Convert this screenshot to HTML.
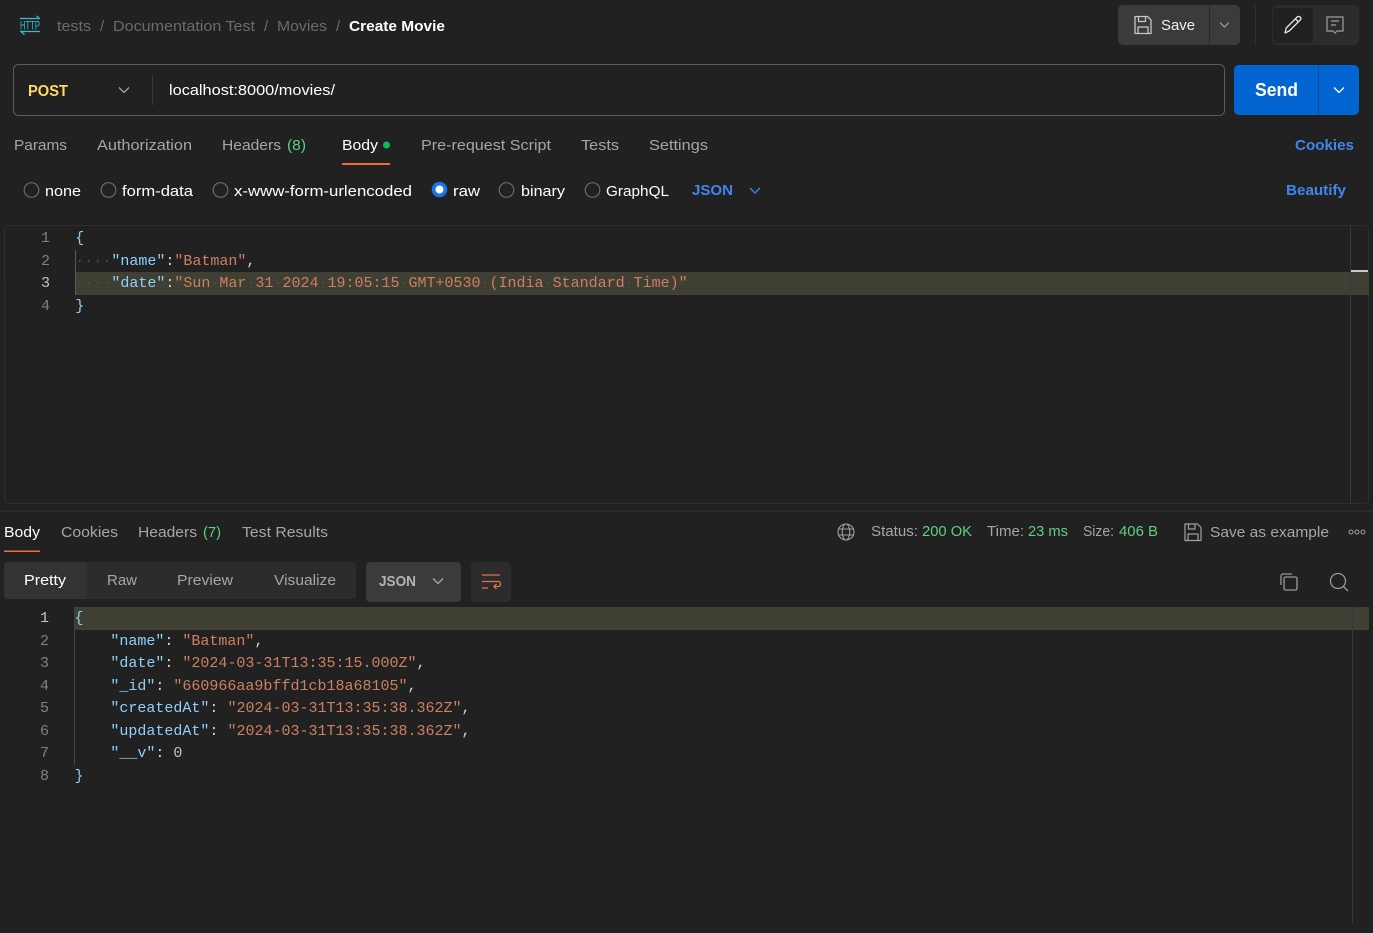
<!DOCTYPE html>
<html><head><meta charset="utf-8"><title>Create Movie</title>
<style>
html,body{margin:0;padding:0;background:#212121;width:1373px;height:933px;overflow:hidden}
svg{display:block;position:absolute;left:0;top:0}
text{font-family:"Liberation Sans",sans-serif;font-size:15px;white-space:pre}
.m,.m text{font-family:"Liberation Mono",monospace;font-size:15px}
.g{fill:#a6a6a6}.w{fill:#ffffff}.bc{fill:#6b6b6b}.gr{fill:#5fcf80}.bl{fill:#3f86f0;font-weight:bold}
.k{fill:#8fd0fb}.s{fill:#ce8060}.p{fill:#d4d4d4}.n{fill:#808080}.d{fill:#505046}
.i{fill:none;stroke:#a8a8a8;stroke-width:1.3;stroke-linecap:round;stroke-linejoin:round}
</style></head><body>
<svg width="1373" height="933" viewBox="0 0 1373 933" xmlns="http://www.w3.org/2000/svg">
<rect width="1373" height="933" fill="#212121"/>

<!-- HTTP icon -->
<g fill="none" stroke="#2fc0d8" stroke-width="1.2">
<path d="M20 18.500H40M36.500 15.800L39.500 18.500"/><path d="M20 31.500H40M21 31.500L24.500 34.500"/>
</g>
<text x="20" y="29.500" style="font-size:11.500px" fill="#2fc0d8" textLength="20" lengthAdjust="spacingAndGlyphs">HTTP</text>

<!-- breadcrumb -->
<text class="bc" x="57" y="31" textLength="34" lengthAdjust="spacingAndGlyphs">tests</text>
<text class="bc" x="100" y="31">/</text>
<text class="bc" x="113" y="31" textLength="142" lengthAdjust="spacingAndGlyphs">Documentation Test</text>
<text class="bc" x="264" y="31">/</text>
<text class="bc" x="277" y="31" textLength="50" lengthAdjust="spacingAndGlyphs">Movies</text>
<text class="bc" x="336" y="31">/</text>
<text class="w" x="349" y="31" textLength="96" lengthAdjust="spacingAndGlyphs" font-weight="bold">Create Movie</text>

<!-- Save group -->
<rect x="1118" y="5" width="122" height="40" rx="5" fill="#3b3b3b"/>
<rect x="1209" y="5" width="1" height="40" fill="#2a2a2a"/>
<g fill="none" stroke="#c8c8c8" stroke-width="1.3" stroke-linejoin="round">
<path d="M1135 16.500h12.500l3.500 3.500v13.500h-16z"/><path d="M1138.500 16.500v5h7v-5"/><path d="M1138 33.500v-6.500h10v6.500"/>
</g>
<text fill="#f0f0f0" x="1161" y="30" textLength="34" lengthAdjust="spacingAndGlyphs">Save</text>
<path d="M1220 22.500l4.500 4.500 4.500-4.500" fill="none" stroke="#a0a0a0" stroke-width="1.200"/>
<rect x="1255" y="5" width="1" height="40" fill="#2e2e2e"/>
<rect x="1272" y="5" width="87" height="40" rx="5" fill="#2c2c2c"/>
<rect x="1273" y="8" width="40" height="35" rx="4" fill="#212121"/>
<path d="M1285 33l1.200-5 11-11q1.500-1.200 3 0t0 3l-11 11zM1295.500 19l3 3" fill="none" stroke="#e6e6e6" stroke-width="1.300" stroke-linejoin="round"/>
<path d="M1327 17h16v14h-6l-2 2-2-2h-6zM1331 21h8M1331 25h5" fill="none" stroke="#a0a0a0" stroke-width="1.200" stroke-linejoin="round"/>

<!-- URL bar -->
<rect x="13.500" y="64.500" width="1211" height="51" rx="5" fill="#212121" stroke="#5c5c5c"/>
<text x="28" y="96" fill="#ffd966" font-weight="bold" textLength="40" lengthAdjust="spacingAndGlyphs" style="font-size:16px">POST</text>
<path d="M119 87.500l5 5 5-5" fill="none" stroke="#a8a8a8" stroke-width="1.300"/>
<rect x="152" y="75" width="1" height="30" fill="#3a3a3a"/>
<text class="w" x="169" y="95" textLength="166" lengthAdjust="spacingAndGlyphs">localhost:8000/movies/</text>

<!-- Send -->
<rect x="1234" y="65" width="125" height="50" rx="5" fill="#0265d2"/>
<rect x="1318" y="65" width="1" height="50" fill="#0a4f9e"/>
<text class="w" x="1255" y="96" textLength="43" lengthAdjust="spacingAndGlyphs" font-weight="bold" style="font-size:18px">Send</text>
<path d="M1334 87.500l5 5 5-5" fill="none" stroke="#fff" stroke-width="1.300"/>

<!-- request tabs -->
<text class="g" x="14" y="150" textLength="53" lengthAdjust="spacingAndGlyphs">Params</text>
<text class="g" x="97" y="150" textLength="95" lengthAdjust="spacingAndGlyphs">Authorization</text>
<text class="g" x="222" y="150" textLength="59" lengthAdjust="spacingAndGlyphs">Headers</text>
<text class="gr" x="287" y="150" textLength="19" lengthAdjust="spacingAndGlyphs">(8)</text>
<text class="w" x="342" y="150" textLength="36" lengthAdjust="spacingAndGlyphs">Body</text>
<circle cx="386.500" cy="145" r="3.500" fill="#0cbb52"/>
<rect x="342" y="163" width="48" height="2" fill="#f26b3a"/>
<text class="g" x="421" y="150" textLength="130" lengthAdjust="spacingAndGlyphs">Pre-request Script</text>
<text class="g" x="581" y="150" textLength="38" lengthAdjust="spacingAndGlyphs">Tests</text>
<text class="g" x="649" y="150" textLength="59" lengthAdjust="spacingAndGlyphs">Settings</text>
<text class="bl" x="1295" y="150" textLength="59" lengthAdjust="spacingAndGlyphs">Cookies</text>

<!-- radios -->
<g fill="none" stroke="#6a6a6a" stroke-width="1.200">
<circle cx="31.500" cy="190" r="7.300"/><circle cx="108.500" cy="190" r="7.300"/><circle cx="220.500" cy="190" r="7.300"/>
<circle cx="506.500" cy="190" r="7.300"/><circle cx="592.500" cy="190" r="7.300"/>
</g>
<circle cx="439.500" cy="189.500" r="7.800" fill="#1a73e8"/><circle cx="439.500" cy="189.500" r="4" fill="#fff"/>
<text class="w" x="45" y="196" textLength="36" lengthAdjust="spacingAndGlyphs">none</text>
<text class="w" x="122" y="196" textLength="71" lengthAdjust="spacingAndGlyphs">form-data</text>
<text class="w" x="234" y="196" textLength="178" lengthAdjust="spacingAndGlyphs">x-www-form-urlencoded</text>
<text class="w" x="453" y="196" textLength="27" lengthAdjust="spacingAndGlyphs">raw</text>
<text class="w" x="521" y="196" textLength="44" lengthAdjust="spacingAndGlyphs">binary</text>
<text class="w" x="606" y="196" textLength="63" lengthAdjust="spacingAndGlyphs">GraphQL</text>
<text class="bl" x="692" y="195" textLength="41" lengthAdjust="spacingAndGlyphs">JSON</text>
<path d="M750 188l5 5 5-5" fill="none" stroke="#3f86f0" stroke-width="1.300"/>
<text class="bl" x="1286" y="195" textLength="60" lengthAdjust="spacingAndGlyphs">Beautify</text>

<!-- request editor -->
<rect x="4.500" y="225.500" width="1364" height="278" rx="4" fill="#212121" stroke="#2e2e2e"/>
<rect x="76" y="272" width="1293" height="23" fill="#3f3f33"/>
<rect x="75" y="250" width="1" height="45" fill="#5a5a5a"/>
<rect x="1350" y="226" width="1" height="277" fill="#383838"/>
<rect x="1351" y="270" width="17" height="2" fill="#c8c8c8"/>
<g class="m">
<text class="n" x="50" y="242" text-anchor="end">1</text>
<text class="n" x="50" y="265" text-anchor="end">2</text>
<text x="50" y="287" text-anchor="end" fill="#c4c4c4">3</text>
<text class="n" x="50" y="310" text-anchor="end">4</text>
<text class="k" x="75.300" y="242">{</text>
<text x="75.300" y="265"><tspan class="d">····</tspan><tspan class="k">"name"</tspan><tspan class="p">:</tspan><tspan class="s">"Batman"</tspan><tspan class="p">,</tspan></text>
<text x="75.300" y="287"><tspan class="d">····</tspan><tspan class="k">"date"</tspan><tspan class="p">:</tspan><tspan class="s">"Sun</tspan><tspan class="d">·</tspan><tspan class="s">Mar</tspan><tspan class="d">·</tspan><tspan class="s">31</tspan><tspan class="d">·</tspan><tspan class="s">2024</tspan><tspan class="d">·</tspan><tspan class="s">19:05:15</tspan><tspan class="d">·</tspan><tspan class="s">GMT+0530</tspan><tspan class="d">·</tspan><tspan class="s">(India</tspan><tspan class="d">·</tspan><tspan class="s">Standard</tspan><tspan class="d">·</tspan><tspan class="s">Time)"</tspan></text>
<text class="k" x="75.300" y="310">}</text>
</g>

<!-- divider -->
<rect x="0" y="510" width="1373" height="2" fill="#2a2a2a"/>

<!-- response tabs -->
<text class="w" x="4" y="537" textLength="36" lengthAdjust="spacingAndGlyphs">Body</text>
<rect x="4" y="550.500" width="36" height="1.500" fill="#f26b3a"/>
<text class="g" x="61" y="537" textLength="57" lengthAdjust="spacingAndGlyphs">Cookies</text>
<text class="g" x="138" y="537" textLength="59" lengthAdjust="spacingAndGlyphs">Headers</text>
<text class="gr" x="203" y="537" textLength="18" lengthAdjust="spacingAndGlyphs">(7)</text>
<text class="g" x="242" y="537" textLength="86" lengthAdjust="spacingAndGlyphs">Test Results</text>

<!-- status -->
<g class="i" style="stroke:#a0a0a0;stroke-width:1.100">
<circle cx="846" cy="532" r="8"/><ellipse cx="846" cy="532" rx="3.800" ry="8"/><path d="M838.700 529h14.600M838.700 535h14.600"/>
</g>
<text class="g" x="871" y="536" textLength="47" lengthAdjust="spacingAndGlyphs">Status:</text>
<text class="gr" x="922" y="536" textLength="50" lengthAdjust="spacingAndGlyphs">200 OK</text>
<text class="g" x="987" y="536" textLength="37" lengthAdjust="spacingAndGlyphs">Time:</text>
<text class="gr" x="1028" y="536" textLength="40" lengthAdjust="spacingAndGlyphs">23 ms</text>
<text class="g" x="1083" y="536" textLength="31" lengthAdjust="spacingAndGlyphs">Size:</text>
<text class="gr" x="1119" y="536" textLength="39" lengthAdjust="spacingAndGlyphs">406 B</text>
<g fill="none" stroke="#a0a0a0" stroke-width="1.200" stroke-linejoin="round">
<path d="M1185 524h12.500l3.500 3.500v13h-16z"/><path d="M1188.500 524v5h6.500v-5"/><path d="M1188 540.500v-6.500h10v6.500"/>
</g>
<text class="g" x="1210" y="537" textLength="119" lengthAdjust="spacingAndGlyphs">Save as example</text>
<g fill="none" stroke="#a0a0a0" stroke-width="1"><circle cx="1351" cy="532" r="2"/><circle cx="1357" cy="532" r="2"/><circle cx="1363" cy="532" r="2"/></g>

<!-- view controls -->
<rect x="4" y="562" width="352" height="37" rx="4" fill="#2c2c2c"/>
<path d="M8 562h79v37H8a4 4 0 0 1-4-4v-29a4 4 0 0 1 4-4z" fill="#333333"/>
<text class="w" x="24" y="585" textLength="42" lengthAdjust="spacingAndGlyphs">Pretty</text>
<text class="g" x="107" y="585" textLength="30" lengthAdjust="spacingAndGlyphs">Raw</text>
<text class="g" x="177" y="585" textLength="56" lengthAdjust="spacingAndGlyphs">Preview</text>
<text class="g" x="274" y="585" textLength="62" lengthAdjust="spacingAndGlyphs">Visualize</text>
<rect x="366" y="562" width="95" height="40" rx="4" fill="#3b3b3b"/>
<text x="379" y="586" fill="#b4b4b4" font-weight="bold" textLength="37" lengthAdjust="spacingAndGlyphs">JSON</text>
<path d="M433 578.500l5 5 5-5" fill="none" stroke="#a8a8a8" stroke-width="1.300"/>
<rect x="471" y="562" width="40" height="40" rx="4" fill="#2c2c2c"/>
<path d="M482 575h18M482 581.500h16q2.500 0 2.500 2.500t-2.500 2.500h-4M496.500 584l-2.500 2.500 2.500 2.500M482 588h6" fill="none" stroke="#e0704a" stroke-width="1.300"/>
<g fill="none" stroke="#9a9a9a" stroke-width="1.300" stroke-linejoin="round">
<rect x="1284" y="577" width="13" height="13" rx="1.500"/><path d="M1281 585v-9a2 2 0 0 1 2-2h9"/>
<circle cx="1338" cy="581" r="7.500"/><path d="M1343.500 586.500l4.500 4.500"/>
</g>

<!-- response editor -->
<rect x="74" y="607" width="1295" height="23" fill="#3f3f33"/>
<rect x="74" y="630" width="1" height="135" fill="#444444"/>
<rect x="1352" y="607" width="1" height="316" fill="#383838"/>
<g class="m">
<text x="49" y="622" text-anchor="end" fill="#c4c4c4">1</text>
<text class="n" x="49" y="645" text-anchor="end">2</text>
<text class="n" x="49" y="667" text-anchor="end">3</text>
<text class="n" x="49" y="690" text-anchor="end">4</text>
<text class="n" x="49" y="712" text-anchor="end">5</text>
<text class="n" x="49" y="735" text-anchor="end">6</text>
<text class="n" x="49" y="757" text-anchor="end">7</text>
<text class="n" x="49" y="780" text-anchor="end">8</text>
<text class="k" x="74.500" y="622">{</text>
<text x="110.400" y="645"><tspan class="k">"name"</tspan><tspan class="p">: </tspan><tspan class="s">"Batman"</tspan><tspan class="p">,</tspan></text>
<text x="110.400" y="667"><tspan class="k">"date"</tspan><tspan class="p">: </tspan><tspan class="s">"2024-03-31T13:35:15.000Z"</tspan><tspan class="p">,</tspan></text>
<text x="110.400" y="690"><tspan class="k">"_id"</tspan><tspan class="p">: </tspan><tspan class="s">"660966aa9bffd1cb18a68105"</tspan><tspan class="p">,</tspan></text>
<text x="110.400" y="712"><tspan class="k">"createdAt"</tspan><tspan class="p">: </tspan><tspan class="s">"2024-03-31T13:35:38.362Z"</tspan><tspan class="p">,</tspan></text>
<text x="110.400" y="735"><tspan class="k">"updatedAt"</tspan><tspan class="p">: </tspan><tspan class="s">"2024-03-31T13:35:38.362Z"</tspan><tspan class="p">,</tspan></text>
<text x="110.400" y="757"><tspan class="k">"__v"</tspan><tspan class="p">: </tspan><tspan fill="#b5cea8">0</tspan></text>
<text class="k" x="74.500" y="780">}</text>
</g>
</svg>
</body></html>
